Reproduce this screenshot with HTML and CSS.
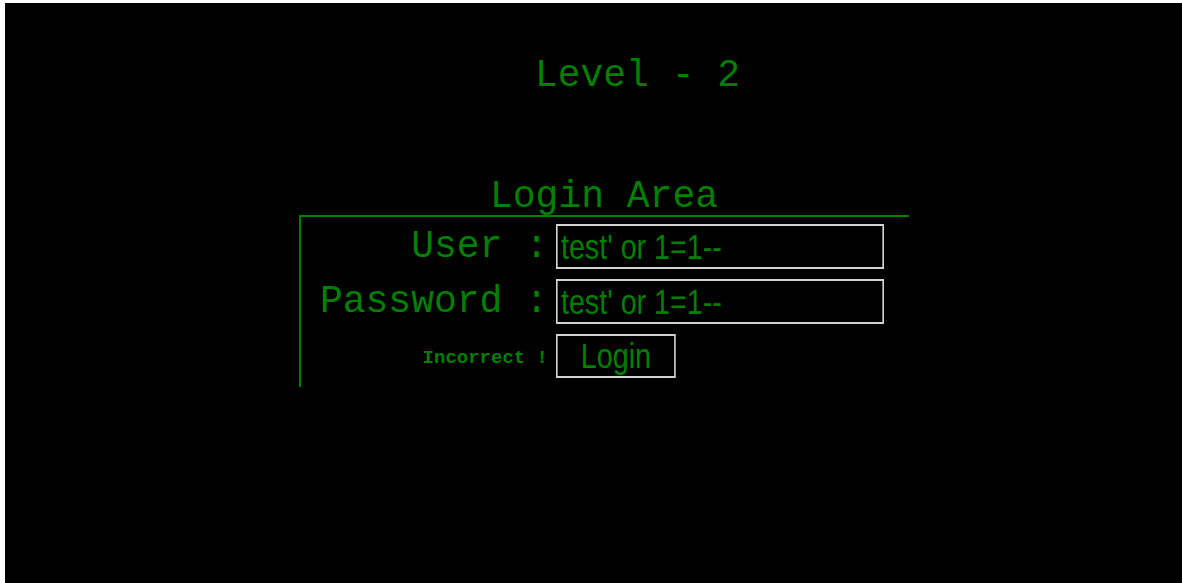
FILE: index.html
```html
<!DOCTYPE html>
<html lang="en">
<head>
<meta charset="utf-8">
<title>Level - 2</title>
<link rel="stylesheet" href="styles.css">
</head>
<body>
<div class="screen">
  <h1 class="level-title">Level - 2</h1>
  <form class="login">
    <h2 class="login-title">Login Area</h2>
    <div class="login-box">
      <label class="field-label" for="user">User :</label>
      <div class="field-cell"><input class="field-input" id="user" type="text" value="test' or 1=1--"></div>
      <label class="field-label" for="pass">Password :</label>
      <div class="field-cell"><input class="field-input" id="pass" type="text" value="test' or 1=1--"></div>
      <span class="status">Incorrect !</span>
      <div class="field-cell"><button class="login-btn" type="button">Login</button></div>
    </div>
  </form>
</div>
</body>
</html>
```
FILE: styles.css
```css
html, body {
  margin: 0;
  background: #fff;
}

.screen {
  margin: 3px 0 0 5px;
  height: 580px;
  background: #000;
  color: #008000;
  font-family: "Liberation Mono", "Courier New", monospace;
  overflow: hidden;
}

.level-title {
  margin: 0;
  padding: 51px 0 0 88px;
  font-size: 38px;
  line-height: 44px;
  font-weight: normal;
  text-align: center;
}

.login {
  width: 610px;
  margin: 81px 0 0 294px;
}

.login-title {
  margin: 0;
  font-size: 38px;
  line-height: 36px;
  font-weight: normal;
  text-align: center;
}

.login-box {
  display: grid;
  grid-template-columns: 247px 328px;
  column-gap: 8px;
  row-gap: 10px;
  align-items: center;
  padding: 7px 0 8px;
  border-top: 2px solid #008000;
  border-left: 2px solid #008000;
}

.field-label {
  font-size: 38px;
  line-height: 44px;
  text-align: right;
}

.field-cell {
  display: flex;
  height: 45px;
}

/* Narrow sans look: the controls are drawn wide and squeezed horizontally */
.field-input,
.login-btn {
  box-sizing: border-box;
  margin: 0;
  border: 2px solid #d2d2d2;
  background: #000;
  color: #008000;
  font-family: "Liberation Sans", Arial, sans-serif;
  font-size: 35px;
  outline: none;
  transform: scaleX(0.82);
  transform-origin: left center;
  flex: none;
}

.field-input {
  width: 400px;
  height: 45px;
  padding: 0 3px 0 4px;
}

.login-btn {
  width: 146px;
  height: 44px;
  padding: 0;
  line-height: 40px;
}

.status {
  font-size: 19px;
  font-weight: bold;
  text-align: right;
  padding-top: 2px;
}
```
